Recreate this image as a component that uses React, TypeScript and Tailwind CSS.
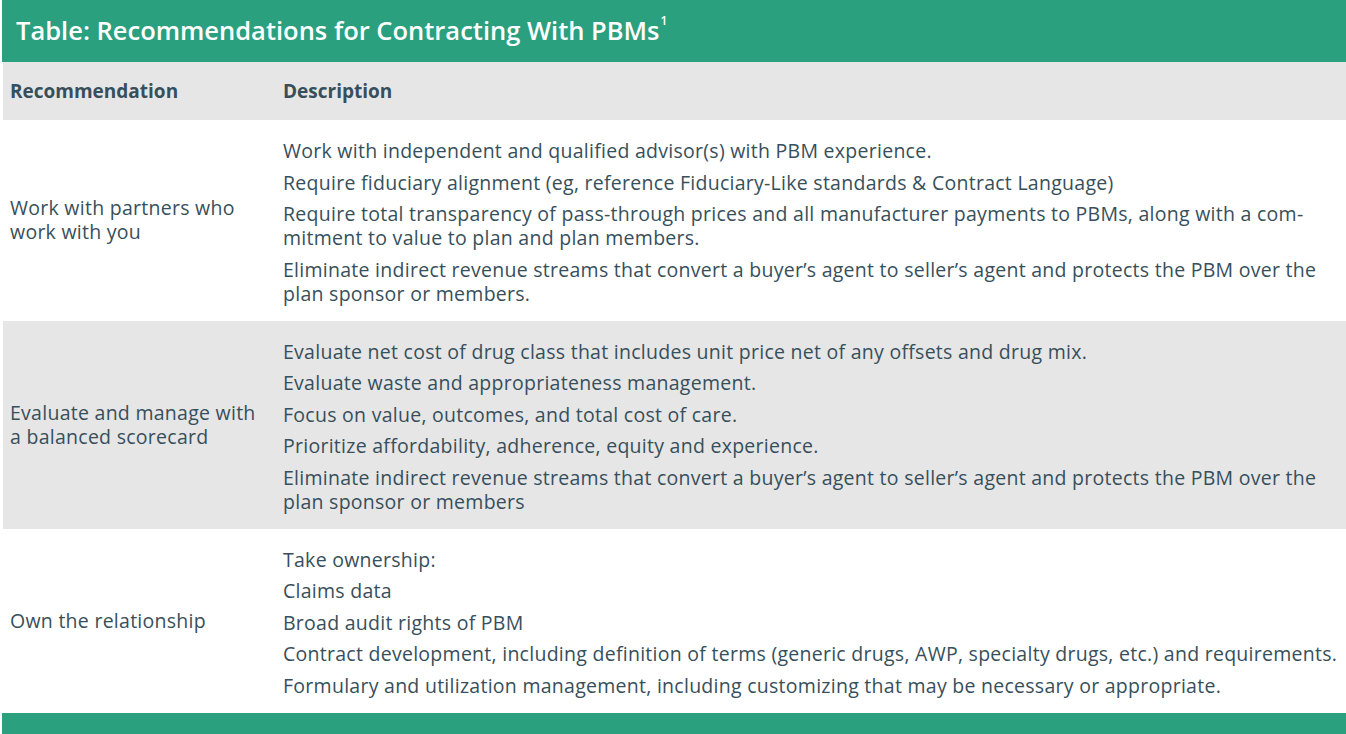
const rows = [
  {
    title: 'Work with partners who work with you',
    bg: 'bg-white',
    items: [
      'Work with independent and qualified advisor(s) with PBM experience.',
      'Require fiduciary alignment (eg, reference Fiduciary-Like standards & Contract Language)',
      'Require total transparency of pass-through prices and all manufacturer payments to PBMs, along with a com\u00admitment to value to plan and plan members.',
      'Eliminate indirect revenue streams that convert a buyer\u2019s agent to seller\u2019s agent and protects the PBM over the plan sponsor or members.',
    ],
  },
  {
    title: 'Evaluate and manage with a balanced scorecard',
    bg: 'bg-[#e6e6e6]',
    items: [
      'Evaluate net cost of drug class that includes unit price net of any offsets and drug mix.',
      'Evaluate waste and appropriateness management.',
      'Focus on value, outcomes, and total cost of care.',
      'Prioritize affordability, adherence, equity and experience.',
      'Eliminate indirect revenue streams that convert a buyer\u2019s agent to seller\u2019s agent and protects the PBM over the plan sponsor or members',
    ],
  },
  {
    title: 'Own the relationship',
    bg: 'bg-white',
    items: [
      'Take ownership:',
      'Claims data',
      'Broad audit rights of PBM',
      'Contract development, including definition of terms (generic drugs, AWP, specialty drugs, etc.) and requirements.',
      'Formulary and utilization management, including customizing that may be necessary or appropriate.',
    ],
  },
];

export default function App() {
  return (
    <div className="min-h-screen bg-white pl-[2px] text-[#374f5b] font-['Open_Sans','Lato',sans-serif]">
      <div className="flex h-[62px] items-center bg-[#2ba07f] pl-[14px]">
        <h1 className="text-[25.5px] font-semibold leading-none text-white">
          Table: Recommendations for Contracting With PBMs
          <sup className="ml-px align-super text-[12px]">1</sup>
        </h1>
      </div>
      <div className="ml-px">
        <div className="flex h-[58px] items-center bg-[#e6e6e6] text-[19px] font-bold">
          <div className="w-[273px] shrink-0 pl-[7px]">Recommendation</div>
          <div className="pl-[7px]">Description</div>
        </div>
        {rows.map((r) => (
          <div key={r.title} className={`flex items-center text-[19.5px] leading-[24px] tracking-[0.27px] ${r.bg}`}>
            <div className="w-[273px] shrink-0 pl-[7px] pr-4">{r.title}</div>
            <div className="flex flex-1 flex-col gap-[7.5px] pl-[7px] pt-[19px] pb-[15px]">
              {r.items.map((t) => (
                <p key={t}>{t}</p>
              ))}
            </div>
          </div>
        ))}
      </div>
      <div className="h-[40px] bg-[#2ba07f]" />
    </div>
  );
}
